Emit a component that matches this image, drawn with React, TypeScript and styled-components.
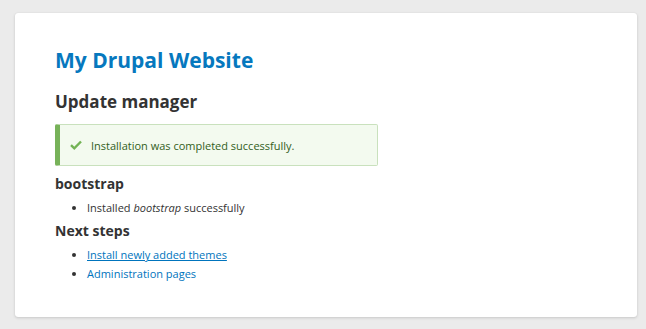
import React from "react";
import styled, { createGlobalStyle } from "styled-components";

const Global = createGlobalStyle`
  html, body { margin: 0; padding: 0; background: #ebebeb; }
  body { font-family: "Open Sans", "Lucida Grande", Verdana, sans-serif; color: #333; }
`;

const Page = styled.div`
  padding: 13px 9px 12px 15px;
`;

const Card = styled.div`
  background: #fff;
  border-radius: 3px;
  box-shadow: 0 1px 3px rgba(0, 0, 0, 0.15), 0 0 1px rgba(0, 0, 0, 0.1);
  height: 304px;
  box-sizing: border-box;
  padding: 34px 40px 0 40px;
`;

const SiteName = styled.h1`
  margin: 0;
  font-size: 21px;
  font-weight: bold;
  color: #0678be;
  line-height: 26px;
`;

const PageTitle = styled.h2`
  margin: 18px 0 0;
  font-size: 17px;
  font-weight: bold;
  color: #333;
  line-height: 22px;
`;

const Message = styled.div`
  margin-top: 11px;
  width: 323px;
  height: 42px;
  box-sizing: border-box;
  background: #f3faef;
  border: 1px solid #c9e1bd;
  border-left: 5px solid #77b259;
  border-radius: 2px;
  display: flex;
  align-items: center;
  padding-left: 10px;
  gap: 9px;
  color: #325e1c;
  font-size: 11px;
`;

const Heading = styled.h3`
  margin: ${(p: { $top: number }) => p.$top}px 0 0;
  font-size: 14px;
  font-weight: bold;
  color: #333;
  line-height: 18px;
`;

const List = styled.ul`
  margin: 5px 0 0;
  padding: 0 0 0 32px;
  font-size: 11px;
  line-height: 19px;
  color: #333;
`;

const Link = styled.a`
  color: #0074bd;
  text-decoration: ${(p: { $underline?: boolean }) => (p.$underline ? "underline" : "none")};
`;

const Check = () => (
  <svg width="12" height="10" viewBox="0 0 12 10">
    <path d="M1 5.2 L4.3 8.3 L11 1.5" fill="none" stroke="#73b355" strokeWidth="2.4" />
  </svg>
);

export default function App() {
  return (
    <>
      <Global />
      <Page>
        <Card>
          <SiteName>My Drupal Website</SiteName>
          <PageTitle>Update manager</PageTitle>
          <Message>
            <Check />
            <span>Installation was completed successfully.</span>
          </Message>
          <Heading $top={9}>bootstrap</Heading>
          <List>
            <li>
              Installed <em>bootstrap</em> successfully
            </li>
          </List>
          <Heading $top={5}>Next steps</Heading>
          <List>
            <li>
              <Link href="#" $underline>Install newly added themes</Link>
            </li>
            <li>
              <Link href="#">Administration pages</Link>
            </li>
          </List>
        </Card>
      </Page>
    </>
  );
}
